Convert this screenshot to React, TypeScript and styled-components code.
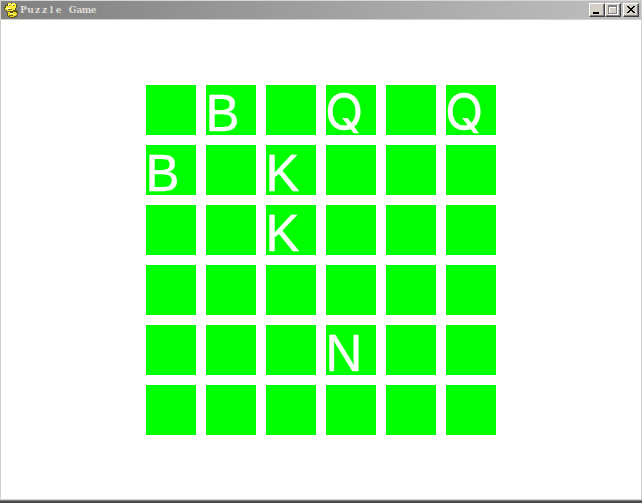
import React from "react";
import styled, { createGlobalStyle } from "styled-components";

const GlobalStyle = createGlobalStyle`
  * { box-sizing: border-box; }
  body { margin: 0; background: #fff; overflow: hidden; }
`;

const Window = styled.div`
  width: 642px;
  height: 503px;
  display: flex;
  flex-direction: column;
  background: #fff;
  border-left: 1px solid #d4d0c8;
  border-right: 1px solid #d4d0c8;
  border-top: 1px solid #d8d6d2;
`;

const TitleBar = styled.header`
  height: 18px;
  flex: none;
  display: flex;
  align-items: center;
  padding: 0 2px;
  background: linear-gradient(to right, #808080, #c0c0c0);
  box-shadow: 0 1px #d4d0c8;
`;

const AppIcon = styled.svg`
  width: 16px;
  height: 16px;
  flex: none;
`;

const Title = styled.h1`
  flex: 1;
  display: flex;
  margin: 0 0 0 1px;
  font: bold 10px/18px "DejaVu Serif Condensed", "DejaVu Serif", serif;
  color: #dedbd4;
`;

const Glyph = styled.span`
  width: 7px;
  display: flex;
  justify-content: center;
  white-space: pre;
`;

const Controls = styled.div`
  display: flex;
`;

const ControlButton = styled.button<{ $gap?: boolean }>`
  width: 16px;
  height: 14px;
  padding: 0;
  margin-left: ${(p) => (p.$gap ? 2 : 0)}px;
  border: 1px solid;
  border-color: #fff #404040 #404040 #fff;
  box-shadow: inset -1px -1px #808080;
  background: #d4d0c8;
  display: block;

  svg { display: block; }
`;

const Client = styled.main`
  flex: 1;
  display: flex;
  justify-content: center;
  padding-top: 66px;
`;

const Board = styled.div`
  display: grid;
  grid-template-columns: repeat(6, 50px);
  grid-auto-rows: 50px;
  gap: 10px;
  align-content: start;
`;

const Cell = styled.div<{ $queen: boolean }>`
  background: #0f0;
  color: #fff;
  font: ${(p) => (p.$queen ? '50px/55px Inter' : '51px/57px "Liberation Sans"')}, Arial, sans-serif;
  -webkit-text-stroke: 0.4px #fff;
  text-indent: ${(p) => (p.$queen ? -1 : -0.6)}px;
`;

const BottomEdge = styled.footer`
  flex: none;
  height: 4px;
  margin: 0 -1px;
  border-top: 1px solid #d4d0c8;
  border-bottom: 2px solid #484848;
  background: #808080;
`;

const title = "Puzzle Game";
const rows = [" B Q Q", "B K   ", "  K   ", "      ", "   N  ", "      "];

const SnakeIcon = () => (
  <AppIcon viewBox="0 0 16 16" aria-hidden="true" shapeRendering="crispEdges">
    <path d="M4 1h8v1h2v4h-1v2h1v1h1v4h-1v2h-2v1H7v-1H5v-1H4v-4h1V9H2V8H1V5h1V3h2z" fill="#5c5620" />
    <path d="M5 1h3v1h1V1h3v1h1v4h-1v2h-2v1H4V8H2V6h1V4h2z" fill="#f8e838" />
    <path d="M5 10h2v1h3v-1h3v1h1v2h-1v1h-2v1H7v-1H5z" fill="#f0da25" />
    <path d="M5 2h2v2H5zM9 2h2v2H9zM3 6h5v1H3zM7 11h3v1H7zM11 12h1v1h-1z" fill="#fffbc4" />
    <path d="M6 3h1v1H6zM10 3h1v1h-1zM5 7h4v1H5zM6 13h4v1H6zM10 9h2v1h-2z" fill="#706616" />
  </AppIcon>
);

export default function App() {
  return (
    <>
      <GlobalStyle />
      <Window>
        <TitleBar>
          <SnakeIcon />
          <Title>
            {[...title].map((char, i) => <Glyph key={i}>{char}</Glyph>)}
          </Title>
          <Controls>
            <ControlButton aria-label="Minimize">
              <svg width="14" height="12"><path d="M3 8h6v2H3z" fill="#000" /></svg>
            </ControlButton>
            <ControlButton aria-label="Maximize">
              <svg width="14" height="12" shapeRendering="crispEdges">
                <path d="M3 2h9v9H3zM4 4v6h7V4z" fill="#fff" fillRule="evenodd" />
                <path d="M2 1h9v9H2zM3 3v6h7V3z" fill="#808080" fillRule="evenodd" />
              </svg>
            </ControlButton>
            <ControlButton $gap aria-label="Close">
              <svg width="14" height="12" shapeRendering="crispEdges">
                <path d="M3 2h2v1h1v1h2V3h1V2h2v1h-1v1H9v1H8v1h1v1h1v1h1v1H9V8H8V7H6v1H5v1H3V8h1V7h1V6h1V5H5V4H4V3H3z" fill="#000" />
              </svg>
            </ControlButton>
          </Controls>
        </TitleBar>
        <Client>
          <Board>
            {rows.flatMap((row, y) =>
              [...row].map((piece, x) => (
                <Cell key={`${x}-${y}`} $queen={piece === "Q"}>{piece.trim()}</Cell>
              ))
            )}
          </Board>
        </Client>
        <BottomEdge />
      </Window>
    </>
  );
}
